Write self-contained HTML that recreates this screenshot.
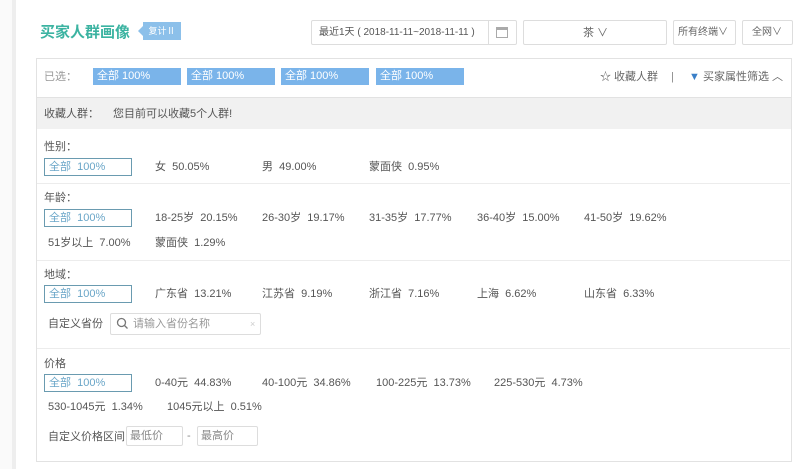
<!DOCTYPE html>
<html><head><meta charset="utf-8"><style>
*{margin:0;padding:0;box-sizing:border-box}
body{width:800px;height:469px;background:#fff;font-family:"Liberation Sans","Noto Sans CJK SC",sans-serif;font-size:11px;line-height:12px;color:#555;position:relative;overflow:hidden}
.a{position:absolute;white-space:nowrap}
.box{position:absolute;border:1px solid #ddd;background:#fff;border-radius:2px}
.tag{position:absolute;background:#7ab4ea;color:#fff;height:17px;width:88px;line-height:17px;padding-left:4px}
.sel{position:absolute;border:1px solid #6a9bb0;width:88px;height:18px;line-height:16px;padding-left:4px;color:#6aa6c8;background:#fff}
.sep{position:absolute;left:37px;width:753px;height:1px;background:#ececec}
</style></head><body>
<div class="a" style="left:0;top:0;width:12px;height:469px;background:#fafafa"></div>
<div class="a" style="left:12px;top:0;width:4px;height:469px;background:#eee"></div>
<div class="a" style="left:40px;top:24px;font-size:15px;line-height:17px;color:#3bb3a1;font-weight:bold">买家人群画像</div>
<div class="a" style="left:143px;top:22px;width:38px;height:18px;background:#8cc0ea;color:#fff;font-size:9px;line-height:18px;text-align:center">复计Ⅱ</div>
<div class="a" style="left:138px;top:26px;width:0;height:0;border-top:5px solid transparent;border-bottom:5px solid transparent;border-right:5px solid #8cc0ea"></div>
<div class="box" style="left:311px;top:20px;width:206px;height:25px"></div>
<div class="a" style="left:319px;top:27px;font-size:10px;color:#555">最近1天 ( 2018-11-11~2018-11-11 )</div>
<div class="a" style="left:488px;top:20px;width:1px;height:25px;background:#ddd"></div>
<div class="a" style="left:496px;top:27px;width:12px;height:11px;border:1px solid #aaa;border-top:3px solid #aaa"></div>
<div class="box" style="left:523px;top:20px;width:144px;height:25px"></div>
<div class="a" style="left:583px;top:27px;color:#666">茶 ∨</div>
<div class="box" style="left:673px;top:20px;width:63px;height:25px"></div>
<div class="a" style="left:678px;top:27px;color:#666;font-size:10px">所有终端∨</div>
<div class="box" style="left:742px;top:20px;width:51px;height:25px"></div>
<div class="a" style="left:752px;top:27px;color:#666;font-size:10px">全网∨</div>

<div class="a" style="left:36px;top:58px;width:756px;height:404px;border:1px solid #e2e2e2"></div>
<div class="a" style="left:44px;top:71px;color:#999">已选：</div>
<div class="tag" style="left:93px;top:68px">全部 100%</div>
<div class="tag" style="left:187px;top:68px">全部 100%</div>
<div class="tag" style="left:281px;top:68px">全部 100%</div>
<div class="tag" style="left:376px;top:68px">全部 100%</div>
<div class="a" style="left:600px;top:71px;color:#666">☆ 收藏人群</div>
<div class="a" style="left:671px;top:71px;color:#888">|</div>
<div class="a" style="left:689px;top:71px;color:#666"><span style="color:#3a7fc8">▼</span> 买家属性筛选 ︿</div>
<div class="a" style="left:37px;top:97px;width:754px;height:32px;background:#f1f1f1;border-top:1px solid #e2e2e2"></div>
<div class="a" style="left:44px;top:108px">收藏人群：</div>
<div class="a" style="left:113px;top:108px">您目前可以收藏5个人群!</div>

<div class="a" style="left:44px;top:141px">性别：</div>
<div class="sel" style="left:44px;top:158px">全部 &nbsp;100%</div>
<div class="a" style="left:155px;top:161px">女 &nbsp;50.05%</div>
<div class="a" style="left:262px;top:161px">男 &nbsp;49.00%</div>
<div class="a" style="left:369px;top:161px">蒙面侠 &nbsp;0.95%</div>
<div class="sep" style="top:183px"></div>

<div class="a" style="left:44px;top:192px">年龄：</div>
<div class="sel" style="left:44px;top:209px">全部 &nbsp;100%</div>
<div class="a" style="left:155px;top:212px">18-25岁 &nbsp;20.15%</div>
<div class="a" style="left:262px;top:212px">26-30岁 &nbsp;19.17%</div>
<div class="a" style="left:369px;top:212px">31-35岁 &nbsp;17.77%</div>
<div class="a" style="left:477px;top:212px">36-40岁 &nbsp;15.00%</div>
<div class="a" style="left:584px;top:212px">41-50岁 &nbsp;19.62%</div>
<div class="a" style="left:48px;top:237px">51岁以上 &nbsp;7.00%</div>
<div class="a" style="left:155px;top:237px">蒙面侠 &nbsp;1.29%</div>
<div class="sep" style="top:260px"></div>

<div class="a" style="left:44px;top:269px">地域：</div>
<div class="sel" style="left:44px;top:285px">全部 &nbsp;100%</div>
<div class="a" style="left:155px;top:288px">广东省 &nbsp;13.21%</div>
<div class="a" style="left:262px;top:288px">江苏省 &nbsp;9.19%</div>
<div class="a" style="left:369px;top:288px">浙江省 &nbsp;7.16%</div>
<div class="a" style="left:477px;top:288px">上海 &nbsp;6.62%</div>
<div class="a" style="left:584px;top:288px">山东省 &nbsp;6.33%</div>
<div class="a" style="left:48px;top:318px">自定义省份</div>
<div class="box" style="left:110px;top:313px;width:151px;height:22px"></div>
<svg class="a" style="left:116px;top:317px" width="13" height="13" viewBox="0 0 13 13"><circle cx="5.5" cy="5.5" r="4" fill="none" stroke="#777" stroke-width="1.3"/><line x1="8.5" y1="8.5" x2="11.5" y2="11.5" stroke="#777" stroke-width="1.3"/></svg>
<div class="a" style="left:133px;top:318px;color:#999">请输入省份名称</div>
<div class="a" style="left:250px;top:318px;color:#ccc;font-size:9px">×</div>
<div class="sep" style="top:348px"></div>

<div class="a" style="left:44px;top:358px">价格</div>
<div class="sel" style="left:44px;top:374px">全部 &nbsp;100%</div>
<div class="a" style="left:155px;top:377px">0-40元 &nbsp;44.83%</div>
<div class="a" style="left:262px;top:377px">40-100元 &nbsp;34.86%</div>
<div class="a" style="left:376px;top:377px">100-225元 &nbsp;13.73%</div>
<div class="a" style="left:494px;top:377px">225-530元 &nbsp;4.73%</div>
<div class="a" style="left:48px;top:401px">530-1045元 &nbsp;1.34%</div>
<div class="a" style="left:167px;top:401px">1045元以上 &nbsp;0.51%</div>
<div class="a" style="left:48px;top:431px">自定义价格区间</div>
<div class="box" style="left:126px;top:426px;width:57px;height:20px"></div>
<div class="a" style="left:130px;top:430px;color:#888">最低价</div>
<div class="a" style="left:187px;top:430px;color:#888">-</div>
<div class="box" style="left:197px;top:426px;width:61px;height:20px"></div>
<div class="a" style="left:201px;top:430px;color:#888">最高价</div>
</body></html>
